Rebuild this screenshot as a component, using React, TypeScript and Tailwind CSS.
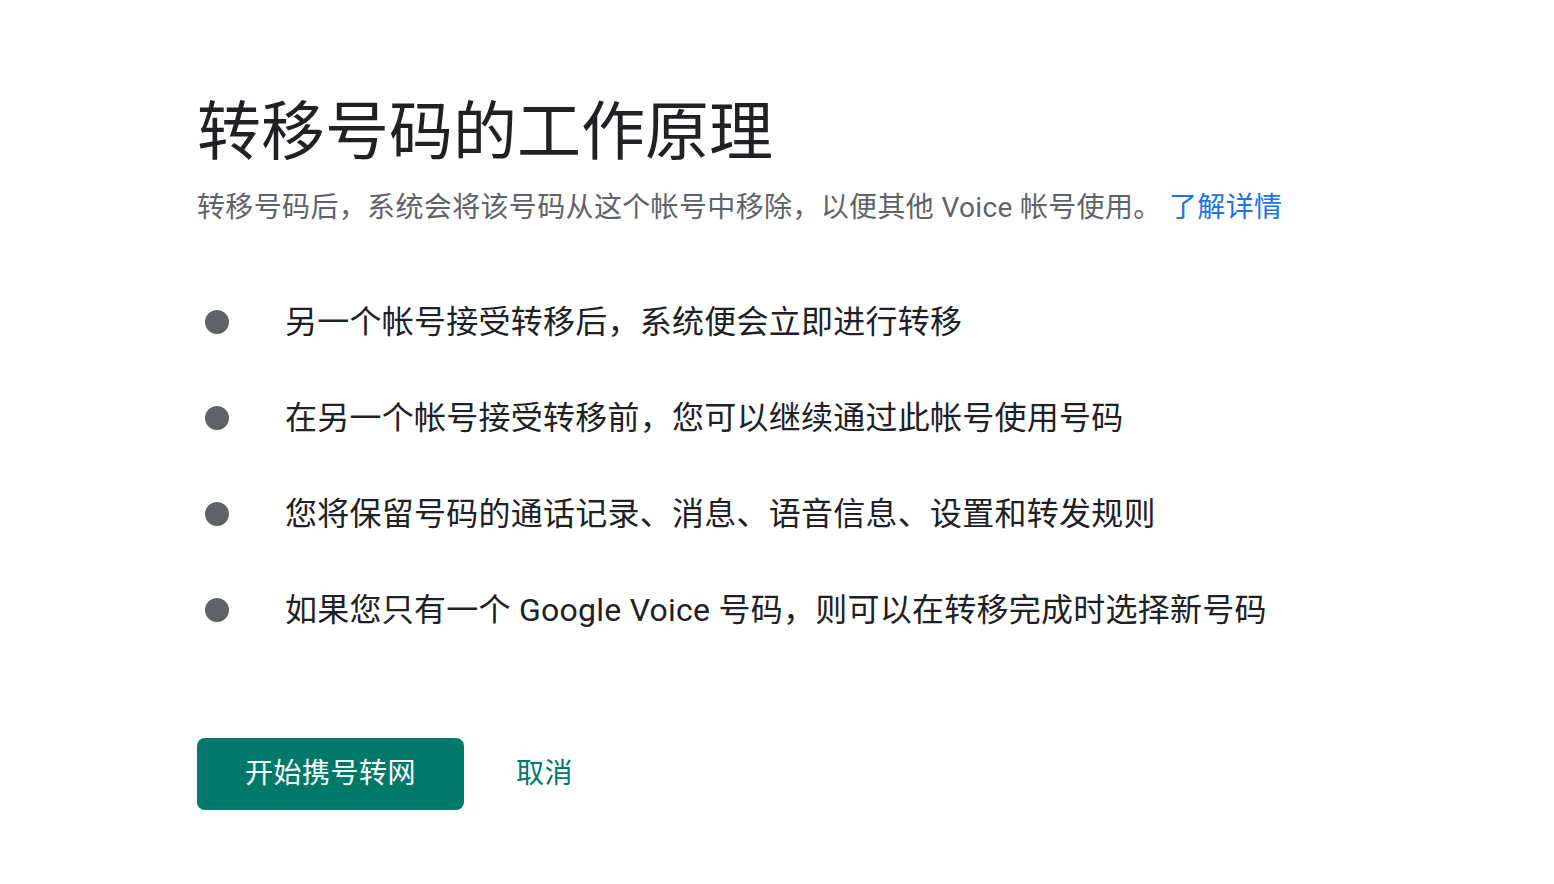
import React from 'react';

const items = [
  '另一个帐号接受转移后，系统便会立即进行转移',
  '在另一个帐号接受转移前，您可以继续通过此帐号使用号码',
  '您将保留号码的通话记录、消息、语音信息、设置和转发规则',
  '如果您只有一个 Google Voice 号码，则可以在转移完成时选择新号码',
];

export default function App() {
  return (
    <div
      className="min-h-screen bg-white pl-[197px] pt-[89px]"
      style={{ fontFamily: 'Roboto, "Noto Sans CJK SC", sans-serif' }}
    >
      <h1 className="text-[64px] leading-[88px] font-normal text-[#202124]">转移号码的工作原理</h1>
      <p className="mt-[11px] text-[28px] leading-[40px] tracking-[0.35px] text-[#5f6368]">
        转移号码后，系统会将该号码从这个帐号中移除，以便其他 Voice 帐号使用。{' '}
        <a href="#" className="text-[#1a73e8]">了解详情</a>
      </p>

      <ul className="mt-[46px] flex flex-col">
        {items.map((t) => (
          <li key={t} className="flex h-[96px] items-center">
            <span className="ml-2 mr-14 h-6 w-6 shrink-0 rounded-full bg-[#5f6368]" />
            <span className="text-[32px] leading-[40px] tracking-[0.25px] text-[#202124]">{t}</span>
          </li>
        ))}
      </ul>

      <div className="mt-20 flex items-center gap-[52px]">
        <button className="h-[72px] rounded-lg bg-[#00796b] px-12 text-[28px] tracking-[0.5px] text-white">
          开始携号转网
        </button>
        <button className="text-[28px] tracking-[0.5px] text-[#00796b]">取消</button>
      </div>
    </div>
  );
}
